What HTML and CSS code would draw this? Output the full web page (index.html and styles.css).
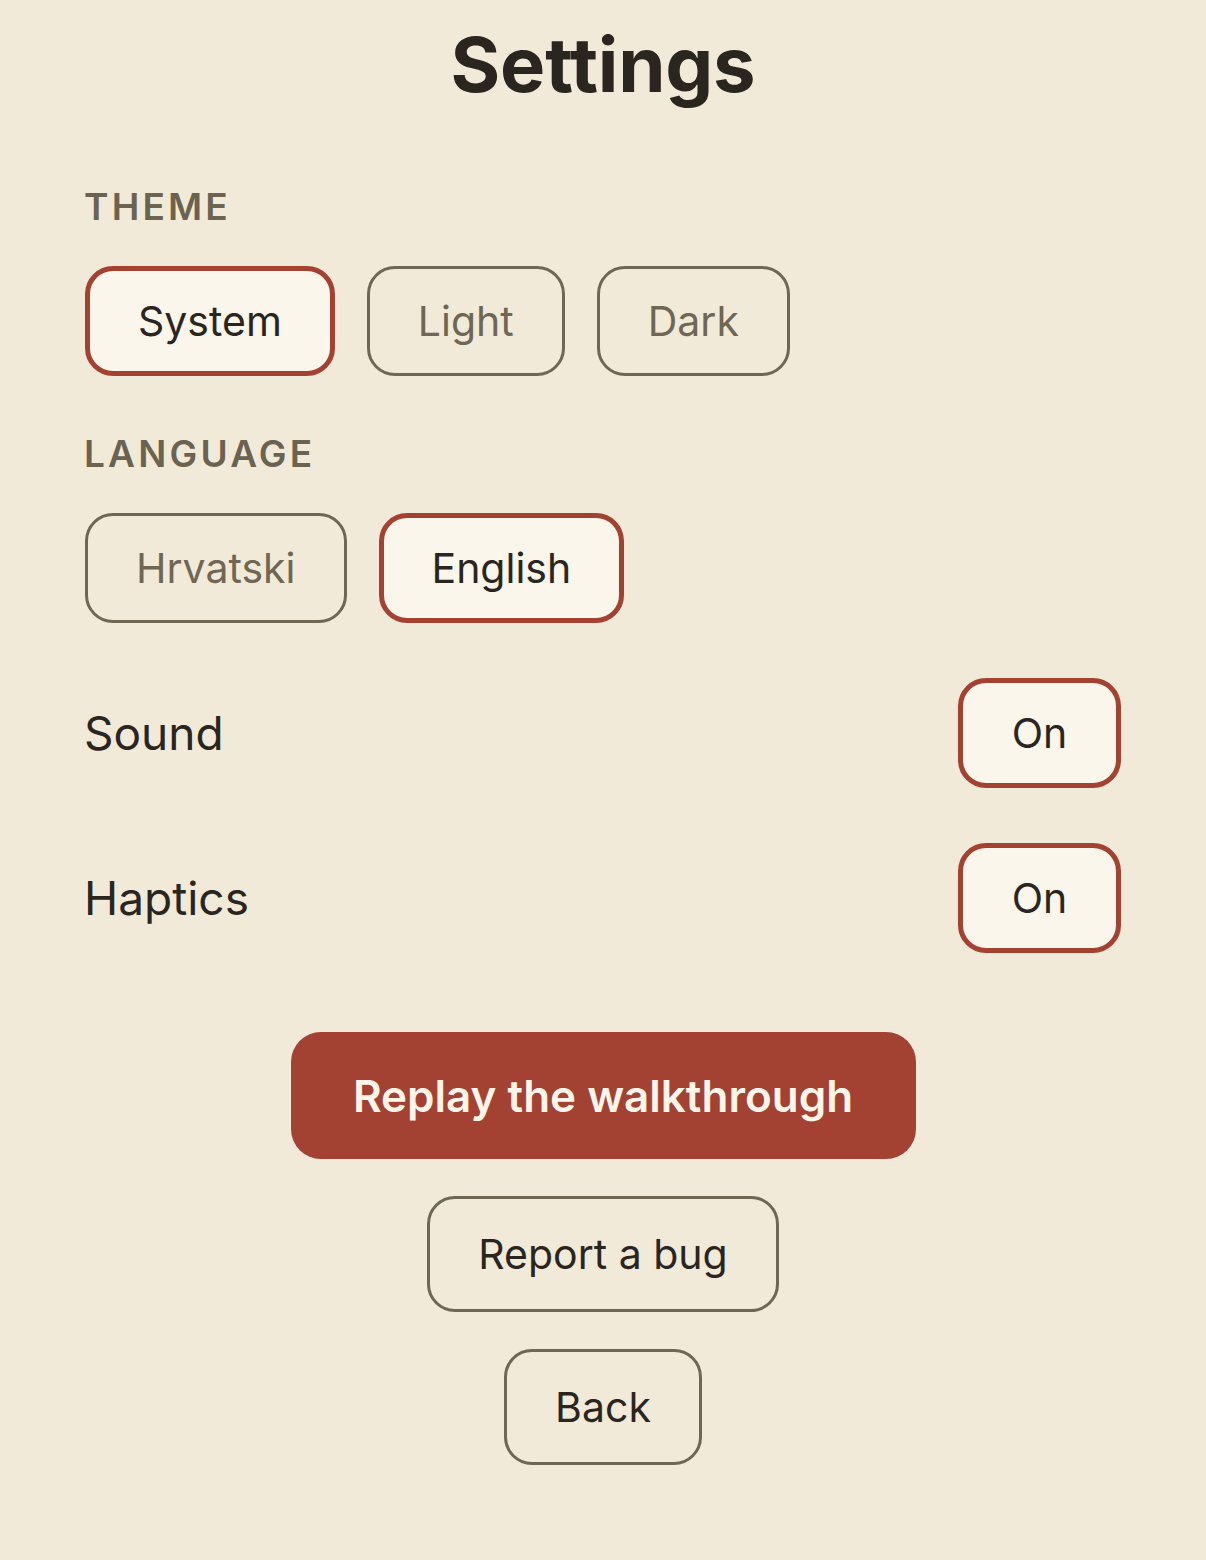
FILE: index.html
```html
<!DOCTYPE html>
<html lang="en">
<head>
<meta charset="utf-8">
<title>Settings</title>
<link rel="stylesheet" href="styles.css">
</head>
<body>
<main class="screen">
  <h1 class="title">Settings</h1>

  <section class="group">
    <h2 class="group-label">THEME</h2>
    <div class="options">
      <button class="chip selected">System</button>
      <button class="chip">Light</button>
      <button class="chip">Dark</button>
    </div>
  </section>

  <section class="group group-language">
    <h2 class="group-label">LANGUAGE</h2>
    <div class="options">
      <button class="chip">Hrvatski</button>
      <button class="chip selected">English</button>
    </div>
  </section>

  <div class="toggle-row">
    <span class="toggle-label">Sound</span>
    <button class="chip selected toggle">On</button>
  </div>
  <div class="toggle-row">
    <span class="toggle-label">Haptics</span>
    <button class="chip selected toggle">On</button>
  </div>

  <div class="actions">
    <button class="primary">Replay the walkthrough</button>
    <button class="chip action">Report a bug</button>
    <button class="chip action">Back</button>
  </div>
</main>
</body>
</html>
```

FILE: styles.css
```css
* { box-sizing: border-box; }

html, body {
  margin: 0;
  padding: 0;
  background: #f2ead9;
}

body {
  font-family: Inter, "Noto Sans", "Liberation Sans", sans-serif;
  color: #2a251e;
}

.screen {
  display: flex;
  flex-direction: column;
  padding: 18px 85px 0 85px;
  min-height: 1560px;
}

.title {
  margin: 0;
  text-align: center;
  font-size: 76px;
  font-weight: 700;
  line-height: 92px;
  letter-spacing: -0.2px;
  color: #2a251e;
}

.group {
  display: flex;
  flex-direction: column;
  margin-top: 74px;
}

.group-language {
  margin-top: 55px;
}

.group-label {
  margin: 0 0 36px -1px;
  font-size: 37px;
  line-height: 46px;
  font-weight: 600;
  letter-spacing: 3.2px;
  color: #6b6250;
}

.options {
  display: flex;
  gap: 32px;
}

.chip {
  font-family: inherit;
  height: 110px;
  padding: 0 48px;
  border: 3px solid #6f6653;
  border-radius: 28px;
  background: transparent;
  color: #6f6653;
  font-size: 41px;
  font-weight: 400;
  line-height: 1;
  display: inline-flex;
  align-items: center;
  justify-content: center;
}

.chip.selected {
  border: 5px solid #a44232;
  padding: 0 48px;
  background: #faf6ec;
  color: #2a251e;
}

.toggle-row {
  display: flex;
  align-items: center;
  justify-content: space-between;
  margin-top: 55px;
}

.toggle-label {
  font-size: 46px;
  color: #2a251e;
  margin-left: -1px;
}

.toggle {
  width: 163px;
  padding: 0;
}

.actions {
  display: flex;
  flex-direction: column;
  align-items: center;
  margin-top: 79px;
  gap: 37px;
}

.primary {
  font-family: inherit;
  width: 625px;
  height: 127px;
  border: none;
  border-radius: 30px;
  background: #a34132;
  color: #fcf5ea;
  font-size: 44px;
  font-weight: 600;
}

.chip.action {
  color: #2a251e;
  height: 116px;
}
```
